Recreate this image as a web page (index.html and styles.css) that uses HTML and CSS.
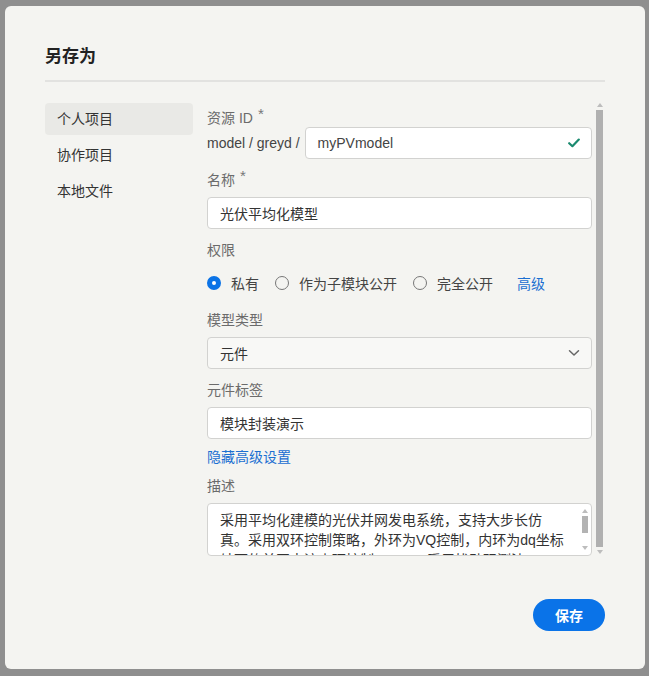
FILE: index.html
```html
<!DOCTYPE html>
<html lang="zh">
<head>
<meta charset="utf-8">
<title>另存为</title>
<link rel="stylesheet" href="styles.css">
</head>
<body>
<div class="dialog">
  <h2 class="title">另存为</h2>
  <div class="divider"></div>
  <div class="body">
    <nav class="nav">
      <div class="nav-item active">个人项目</div>
      <div class="nav-item">协作项目</div>
      <div class="nav-item">本地文件</div>
    </nav>
    <div class="form-area">
      <div class="form">
        <div class="label first">资源 ID<span class="req">*</span></div>
        <div class="id-row">
          <span class="prefix">model / greyd /</span>
          <div class="input grow">
            <span>myPVmodel</span>
            <svg class="check" width="12" height="10" viewBox="0 0 12 10"><path d="M1.2 5.2 L4.4 8.2 L10.8 1.6" fill="none" stroke="#1b8a6f" stroke-width="2.2" stroke-linecap="round" stroke-linejoin="round"/></svg>
          </div>
        </div>

        <div class="label">名称<span class="req">*</span></div>
        <div class="input"><span>光伏平均化模型</span></div>

        <div class="label">权限</div>
        <div class="radios">
          <span class="radio-item"><span class="radio checked"></span>私有</span>
          <span class="radio-item"><span class="radio"></span>作为子模块公开</span>
          <span class="radio-item"><span class="radio"></span>完全公开</span>
          <a class="link adv">高级</a>
        </div>

        <div class="label">模型类型</div>
        <div class="input select">
          <span>元件</span>
          <svg width="12" height="8" viewBox="0 0 12 8"><path d="M1.5 1.8 L6 6 L10.5 1.8" fill="none" stroke="#666" stroke-width="1.5" stroke-linecap="round" stroke-linejoin="round"/></svg>
        </div>

        <div class="label">元件标签</div>
        <div class="input"><span>模块封装演示</span></div>

        <a class="link hide-adv">隐藏高级设置</a>

        <div class="label desc-label">描述</div>
        <div class="textarea">
          <div class="ta-text">采用平均化建模的光伏并网发电系统，支持大步长仿真。采用双环控制策略，外环为VQ控制，内环为dq坐标轴下的并网电流内环控制，MPPT采用扰动观测法。</div>
          <div class="ta-scroll">
            <span class="arr-up small"></span>
            <span class="ta-thumb"></span>
            <span class="arr-down small"></span>
          </div>
        </div>
      </div>
      <div class="vscroll">
        <span class="arr-up"></span>
        <span class="thumb"></span>
        <span class="arr-down"></span>
      </div>
    </div>
  </div>
  <div class="footer">
    <button class="save">保存</button>
  </div>
</div>
</body>
</html>
```

FILE: styles.css
```css
* { box-sizing: border-box; }

html, body {
  margin: 0;
  height: 676px;
  overflow: hidden;
}

body {
  background: #8f8f8f;
  font-family: "Liberation Sans", "Noto Sans CJK SC", sans-serif;
  font-size: 14px;
  color: #333;
}

.dialog {
  margin: 6px 0 0 5px;
  width: 640px;
  height: 663px;
  padding: 40px 40px 38px;
  background: #f4f4f1;
  border-radius: 6px;
  display: flex;
  flex-direction: column;
}

.title {
  margin: 0;
  font-size: 17px;
  line-height: 22px;
  height: 22px;
  font-weight: 700;
  color: #222;
}

.divider {
  height: 2px;
  background: #e2e2e0;
  margin-top: 12px;
}

.body {
  display: flex;
  gap: 14px;
  margin-top: 21px;
  height: 455px;
}

.nav {
  width: 148px;
  display: flex;
  flex-direction: column;
  gap: 4px;
}

.nav-item {
  height: 32px;
  line-height: 32px;
  padding-left: 12px;
  border-radius: 4px;
  color: #333;
}

.nav-item.active { background: #e9e9e6; }

.form-area {
  flex: 1;
  display: flex;
  overflow: hidden;
}

.form {
  width: 385px;
  padding-top: 5px;
  overflow: hidden;
}

.label {
  height: 20px;
  line-height: 20px;
  color: #6b6b6b;
  margin-top: 11px;
  margin-bottom: 7px;
  display: flex;
  align-items: center;
}

.label.first {
  margin-top: 0;
  margin-bottom: -1px;
}

.req {
  margin-left: 5px;
  font-size: 15px;
  line-height: 10px;
  height: 10px;
  align-self: flex-start;
  margin-top: 1px;
  color: #777;
}

.id-row {
  display: flex;
  align-items: center;
}

.prefix {
  color: #444;
  white-space: nowrap;
}

.input {
  height: 32px;
  border: 1px solid #d2d2d0;
  border-radius: 4px;
  background: #fff;
  padding: 0 11px 0 12px;
  display: flex;
  align-items: center;
  justify-content: space-between;
  color: #333;
}

.input.grow {
  flex: 1;
  margin-left: 5px;
  color: #444;
}

.input.select { background: #f8f8f6; }

.radios {
  height: 32px;
  display: flex;
  align-items: center;
}

.radio-item {
  display: flex;
  align-items: center;
  margin-right: 16px;
  color: #444;
}

.radio {
  width: 14px;
  height: 14px;
  border-radius: 50%;
  border: 1.5px solid #777;
  margin-right: 10px;
  background: transparent;
}

.radio.checked {
  border: 5px solid #0b73e6;
  background: #fff;
}

.link {
  color: #1b6fd1;
  text-decoration: none;
}

.adv { margin-left: 8px; }

.hide-adv {
  display: block;
  height: 20px;
  line-height: 20px;
  margin-top: 8px;
}

.desc-label { margin-top: 9px; }

.textarea {
  height: 53px;
  border: 1px solid #d2d2d0;
  border-radius: 4px;
  background: #fff;
  display: flex;
  overflow: hidden;
}

.ta-text {
  width: 371px;
  padding: 6px 12px 0 12px;
  line-height: 20px;
  color: #333;
}

.ta-scroll {
  width: 12px;
  display: flex;
  flex-direction: column;
  align-items: center;
  padding: 5px 0 5px;
}

.ta-thumb {
  width: 6px;
  height: 17px;
  background: #b3b3b3;
  margin-top: 3px;
}

.arr-up, .arr-down {
  width: 0;
  height: 0;
  border-left: 3px solid transparent;
  border-right: 3px solid transparent;
}

.arr-up { border-bottom: 4px solid #bdbdbd; }
.arr-down { border-top: 4px solid #bdbdbd; margin-top: auto; }

.vscroll {
  width: 7px;
  margin-left: 4px;
  display: flex;
  flex-direction: column;
  align-items: center;
}

.thumb {
  width: 7px;
  height: 437px;
  background: #b0b0b0;
  margin-top: 3px;
}

.vscroll .arr-down { margin-top: 3px; }

.footer {
  margin-top: auto;
  display: flex;
  justify-content: flex-end;
}

.save {
  width: 72px;
  height: 32px;
  border: none;
  border-radius: 16px;
  background: #0a73e8;
  color: #fff;
  font-family: "Liberation Sans", "Noto Sans CJK SC", sans-serif;
  font-size: 14px;
  font-weight: 700;
  padding: 0;
}
```
